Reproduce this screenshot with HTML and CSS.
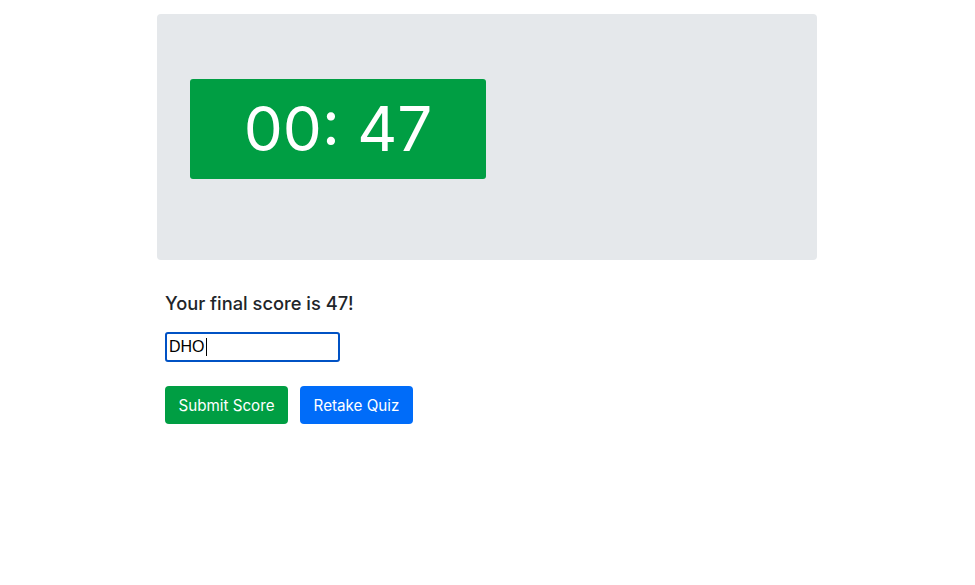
FILE: index.html
```html
<!DOCTYPE html>
<html>
<head>
<meta charset="utf-8">
<link rel="stylesheet" href="styles.css">
</head>
<body>
<div class="container">
  <div class="jumbotron">
    <div class="timer">00: 47</div>
  </div>
  <div class="result">
    <h4 class="score">Your final score is 47!</h4>
    <div class="field"><span class="typed">DHO</span><span class="caret"></span></div>
    <div class="buttons">
      <button class="btn btn-green">Submit Score</button>
      <button class="btn btn-blue">Retake Quiz</button>
    </div>
  </div>
</div>
</body>
</html>
```
FILE: styles.css
```css
* { box-sizing: border-box; }
body {
  margin: 0;
  font-family: Inter, "Noto Sans", sans-serif;
  color: #212529;
  background: #fff;
}
.container {
  width: 660px;
  margin: 14px 0 0 157px;
}
.jumbotron {
  background: #e5e8eb;
  border-radius: 4px;
  height: 246px;
  padding: 65px 33px;
}
.timer {
  width: 296px;
  height: 100px;
  background: #009e43;
  border-radius: 3px;
  color: #fff;
  font-size: 62px;
  line-height: 100px;
  text-align: center;
  font-weight: 400;
}
.result {
  padding: 31px 8px 0;
}
.score {
  margin: 0;
  font-size: 18.3px;
  font-weight: 500;
  line-height: 24px;
}
.field {
  margin-top: 17px;
  width: 175px;
  height: 30px;
  border: 2px solid #0052c4;
  border-radius: 3px;
  display: flex;
  align-items: center;
  padding-left: 2px;
  font-family: "Liberation Sans", Arial, sans-serif;
  font-size: 16px;
  color: #000;
}
.caret {
  display: inline-block;
  width: 1px;
  height: 18px;
  background: #000;
  margin-left: 1px;
}
.buttons {
  margin-top: 24px;
  display: flex;
  gap: 12px;
}
.btn {
  border: none;
  border-radius: 4px;
  height: 38px;
  padding: 0;
  white-space: nowrap;
  font-family: Inter, "Noto Sans", sans-serif;
  font-size: 15.2px;
  color: #fff;
}
.btn-green { background: #009e43; width: 123px; }
.btn-blue { background: #006cf9; width: 113px; }
```
